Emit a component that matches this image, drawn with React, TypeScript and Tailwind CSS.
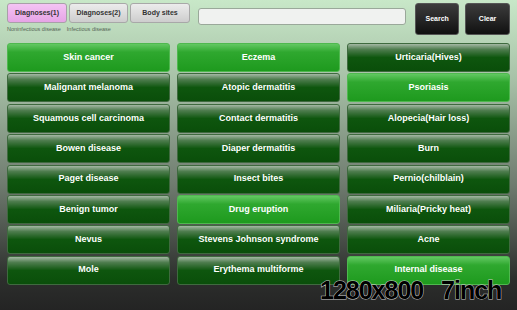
import React from 'react';

const items: { label: string; lit?: boolean }[][] = [
  [
    { label: 'Skin cancer', lit: true },
    { label: 'Malignant melanoma' },
    { label: 'Squamous cell carcinoma' },
    { label: 'Bowen disease' },
    { label: 'Paget disease' },
    { label: 'Benign tumor' },
    { label: 'Nevus' },
    { label: 'Mole' },
  ],
  [
    { label: 'Eczema', lit: true },
    { label: 'Atopic dermatitis' },
    { label: 'Contact dermatitis' },
    { label: 'Diaper dermatitis' },
    { label: 'Insect bites' },
    { label: 'Drug eruption', lit: true },
    { label: 'Stevens Johnson syndrome' },
    { label: 'Erythema multiforme' },
  ],
  [
    { label: 'Urticaria(Hives)' },
    { label: 'Psoriasis', lit: true },
    { label: 'Alopecia(Hair loss)' },
    { label: 'Burn' },
    { label: 'Pernio(chilblain)' },
    { label: 'Miliaria(Pricky heat)' },
    { label: 'Acne' },
    { label: 'Internal disease', lit: true },
  ],
];

const DiseaseButton: React.FC<{ label: string; lit?: boolean }> = ({ label, lit }) => (
  <button
    className={`flex h-[29px] items-center justify-center rounded-[3px] border text-[9px] font-bold text-white ${
      lit
        ? 'border-[#4fb84f] bg-[linear-gradient(to_bottom,#62c862_0%,#2fa82f_30%,#1e9a1e_100%)]'
        : 'border-[#3f6a3f] bg-[linear-gradient(to_bottom,#a4b8a4_0%,#4f7d4f_20%,#0e560e_50%,#0a4e0a_100%)]'
    }`}
  >
    {label}
  </button>
);

const App: React.FC = () => {
  return (
    <div className="relative h-[310px] w-[517px] overflow-hidden bg-[linear-gradient(to_bottom,#c8e8c8_0%,#a8c2a8_25%,#6e7a6e_60%,#2c2e2c_90%,#242424_100%)] font-['Liberation_Sans',Arial,sans-serif]">
      <div className="flex px-[7px] pt-[3px]">
        <div className="flex flex-col">
          <div className="flex gap-[2px]">
            <button className="h-[20px] w-[60px] rounded-[3px] border border-[#a8a0a8] bg-[linear-gradient(to_bottom,#f4c4f4,#e6a4e6)] text-[7px] font-bold text-[#333]">
              Diagnoses(1)
            </button>
            <button className="h-[20px] w-[59px] rounded-[3px] border border-[#a8a8a8] bg-[linear-gradient(to_bottom,#ececec,#cdcdcd)] text-[7px] font-bold text-[#333]">
              Diagnoses(2)
            </button>
            <button className="h-[20px] w-[60px] rounded-[3px] border border-[#a8a8a8] bg-[linear-gradient(to_bottom,#ececec,#cdcdcd)] text-[7px] font-bold text-[#333]">
              Body sites
            </button>
          </div>
          <div className="mt-[2px] flex gap-[6px] text-[5.5px] text-[#556655]">
            <span>Noninfectious disease</span>
            <span>Infectious disease</span>
          </div>
        </div>
        <div className="ml-[8px] mt-[5px] h-[17px] w-[209px] rounded-[3px] border border-[#9aa89a] bg-[#f0f2f0]" />
        <button className="ml-[9px] h-[32px] w-[44px] rounded-[3px] border border-[#555] bg-[linear-gradient(to_bottom,#3c3c3c,#111)] text-[7px] font-bold text-white">
          Search
        </button>
        <button className="ml-[6px] h-[32px] w-[45px] rounded-[3px] border border-[#555] bg-[linear-gradient(to_bottom,#3c3c3c,#111)] text-[7px] font-bold text-white">
          Clear
        </button>
      </div>
      <div className="mt-[8px] grid w-[510px] grid-cols-3 gap-x-[7px] pl-[7px]">
        {items.map((col, i) => (
          <div key={i} className="flex flex-col gap-[1.4px]">
            {col.map((it) => (
              <DiseaseButton key={it.label} label={it.label} lit={it.lit} />
            ))}
          </div>
        ))}
      </div>
      <div className="absolute left-[320px] top-[278px] text-[25px] font-bold leading-none tracking-[-1px] text-black [-webkit-text-stroke:1px_#c8c8c8] [paint-order:stroke_fill]">
        1280x800&nbsp;&nbsp;&nbsp;7inch
      </div>
    </div>
  );
};

export default App;
